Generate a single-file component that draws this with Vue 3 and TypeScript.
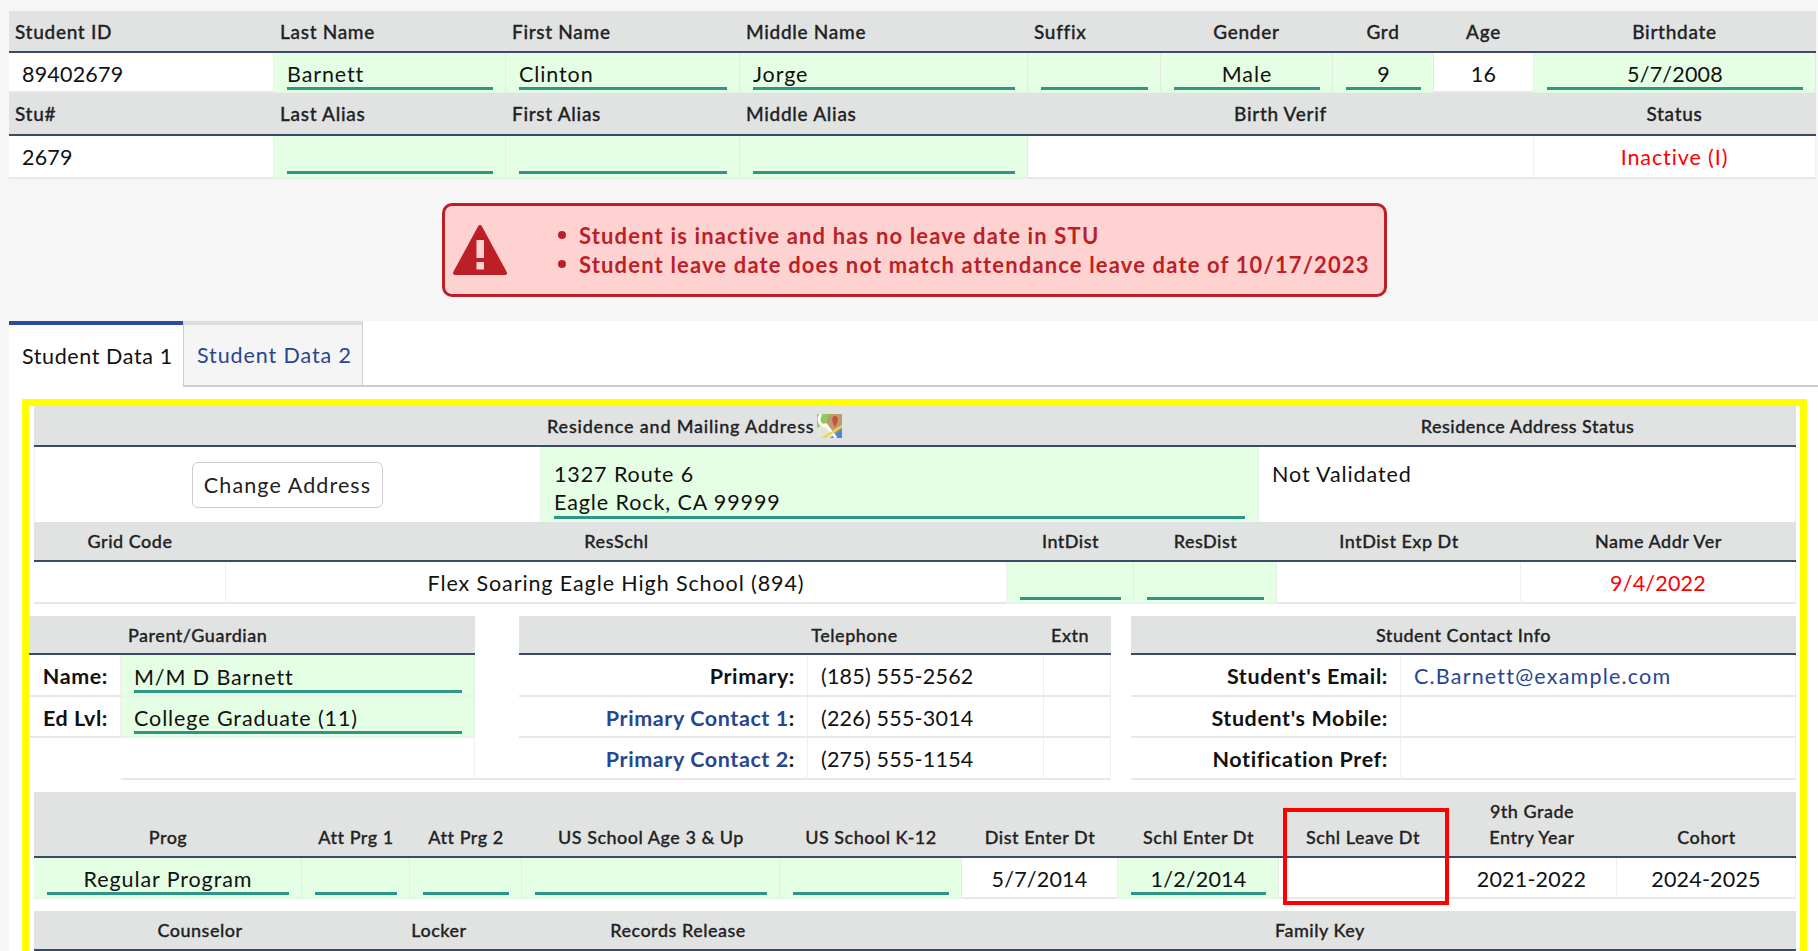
<script setup lang="ts">
type Kind = 'h' | 'v' | 'i' | 'l' | 'sp' | 'spb'
interface Cell {
  t?: string
  k: Kind
  c?: boolean
  red?: boolean
  link?: boolean
  span?: number
  extra?: string
}
const h = (t: string, c = false, span?: number, extra?: string): Cell => ({ t, k: 'h', c, span, extra })
const v = (t = '', c = false, span?: number, red = false): Cell => ({ t, k: 'v', c, span, red })
const i = (t = '', c = false): Cell => ({ t, k: 'i', c })

const student: Cell[] = [
  h('Student ID'), h('Last Name'), h('First Name'), h('Middle Name'), h('Suffix'), h('Gender', true), h('Grd', true), h('Age', true), h('Birthdate', true),
  v('89402679'), i('Barnett'), i('Clinton'), i('Jorge'), i(), i('Male', true), i('9', true), v('16', true), i('5/7/2008', true),
  h('Stu#'), h('Last Alias'), h('First Alias'), h('Middle Alias'), h('Birth Verif', true, 4), h('Status', true),
  v('2679'), i(), i(), i(), v('', false, 4), v('Inactive (I)', true, undefined, true),
]

const gridRow: Cell[] = [
  h('Grid Code', true), h('ResSchl', true), h('IntDist', true), h('ResDist', true), h('IntDist Exp Dt', true), h('Name Addr Ver', true),
  v(), v('Flex Soaring Eagle High School (894)', true), i(), i(), v(), v('9/4/2022', true, undefined, true),
]
const contact: Cell[] = [
  h('Parent/Guardian', false, 2, 'pg'), { k: 'sp' }, h('Telephone', true, 2, 'tel'), h('Extn'), { k: 'sp' }, h('Student Contact Info', true, 2),
  { t: 'Name:', k: 'l' }, i('M/M D Barnett'), { k: 'sp' }, { t: 'Primary:', k: 'l' }, v('(185) 555-2562'), v(), { k: 'sp' }, { t: "Student's Email:", k: 'l' }, { t: 'C.Barnett@example.com', k: 'v', link: true },
  { t: 'Ed Lvl:', k: 'l' }, i('College Graduate (11)'), { k: 'sp' }, { t: 'Primary Contact 1', k: 'l', link: true }, v('(226) 555-3014'), v(), { k: 'sp' }, { t: "Student's Mobile:", k: 'l' }, v(),
  { k: 'sp' }, v(), { k: 'spb' }, { t: 'Primary Contact 2', k: 'l', link: true }, v('(275) 555-1154'), v(), { k: 'sp' }, { t: 'Notification Pref:', k: 'l' }, v(),
]
const program: Cell[] = [
  h('Prog', true), h('Att Prg 1', true), h('Att Prg 2', true), h('US School Age 3 & Up', true), h('US School K-12', true), h('Dist Enter Dt', true), h('Schl Enter Dt', true), h('Schl Leave Dt', true), h('9th Grade\nEntry Year', true), h('Cohort', true),
  i('Regular Program', true), i(), i(), i(), i(), v('5/7/2014', true), i('1/2/2014', true), v(), v('2021-2022', true), v('2024-2025', true),
]
const family: Cell[] = [h('Counselor', true), h('Locker', true), h('Records Release', true), h('Family Key', true)]

const isNum = (t?: string) => !!t && /^[\d()\-/ ]+$/.test(t)
const classes = (c: Cell) => [
  'cell', c.k, c.extra ?? '',
  { center: c.c, red: c.red, link: c.link && c.k === 'v', num: isNum(c.t) },
]
const spanOf = (c: Cell) => (c.span ? { gridColumn: `span ${c.span}` } : undefined)
</script>

<template>
  <div class="page">
    <div class="top">
      <div class="grid g-student">
        <div v-for="(c, n) in student" :key="n" :class="classes(c)" :style="spanOf(c)">
          <span v-if="c.k === 'i'" class="input">{{ c.t }}</span>
          <template v-else>{{ c.t }}</template>
        </div>
      </div>

      <div class="alert-wrap">
        <div class="alert">
          <svg class="warn" viewBox="0 0 54 50" width="54" height="50" aria-hidden="true">
            <path fill="#bd1f27" stroke="#bd1f27" stroke-width="4" stroke-linejoin="round" d="M27 2 L52 48 L2 48 Z" />
            <rect x="23.5" y="15" width="7.5" height="18" fill="#ffd2d2" />
            <rect x="23.5" y="37" width="7.5" height="7.5" fill="#ffd2d2" />
          </svg>
          <ul class="msgs">
            <li>Student is inactive and has no leave date in STU</li>
            <li>Student leave date does not match attendance leave date of 10/17/2023</li>
          </ul>
        </div>
      </div>
    </div>

    <div class="main">
      <div class="tabs">
        <div class="tab active">Student Data 1</div>
        <div class="tab other">Student Data 2</div>
      </div>

      <div class="yellow">
        <div class="grid g-address">
          <div class="cell h addr-h">
            Residence and Mailing Address
            <svg class="map" viewBox="0 0 25 24" width="25" height="24" aria-hidden="true">
              <rect width="25" height="24" fill="#b89d70" />
              <path d="M0 0H12L9 9L0 14Z" fill="#8fca5c" />
              <path d="M0 14L9 9L17 24H0Z" fill="#dfe8d8" />
              <path d="M13 24L25 14V24Z" fill="#4a88d8" />
              <path d="M4 0C0 6 3 13 9 11L19 24" fill="none" stroke="#fff" stroke-width="3" />
              <path d="M6 24L25 12" fill="none" stroke="#f3d24c" stroke-width="2.5" />
              <path d="M18 2C15 2 13.500 6 18 13C22.500 6 21 2 18 2Z" fill="#d4493a" />
            </svg>
          </div>
          <div class="cell h center">Residence Address Status</div>
          <div class="cell v addr-btn"><button class="btn" type="button">Change Address</button></div>
          <div class="cell i addr-i">
            <span class="input textarea">1327 Route 6<br />Eagle Rock, CA 99999</span>
          </div>
          <div class="cell v addr-st">Not Validated</div>
        </div>

        <div class="grid g-grid">
          <div v-for="(c, n) in gridRow" :key="n" :class="classes(c)">
            <span v-if="c.k === 'i'" class="input">{{ c.t }}</span>
            <template v-else>{{ c.t }}</template>
          </div>
        </div>

        <div class="grid g-contact">
          <div v-for="(c, n) in contact" :key="n" :class="classes(c)" :style="spanOf(c)">
            <span v-if="c.k === 'i'" class="input">{{ c.t }}</span>
            <template v-else-if="c.k === 'l' && c.link"><span class="link-b">{{ c.t }}</span>:</template>
            <template v-else>{{ c.t }}</template>
          </div>
        </div>

        <div class="grid g-program">
          <div v-for="(c, n) in program" :key="n" :class="classes(c)">
            <span v-if="c.k === 'i'" class="input">{{ c.t }}</span>
            <template v-else>{{ c.t }}</template>
          </div>
          <div class="redbox"></div>
        </div>

        <div class="grid g-family">
          <div v-for="(c, n) in family" :key="n" :class="classes(c)">{{ c.t }}</div>
        </div>
      </div>
    </div>
  </div>
</template>

<style>
html, body { margin: 0; background: #f6f6f6; overflow: hidden; }
</style>

<style scoped>
.page {
  width: 1818px;
  height: 951px;
  overflow: hidden;
  font-family: "Lato", "Noto Sans", sans-serif;
  font-size: 21.5px;
  color: #111;
  box-sizing: border-box;
  letter-spacing: 0.9px;
}
.top { padding: 11px 2px 0 9px; }
.grid { display: grid; background: #fff; }
.g-student {
  grid-template-columns: 265px 232px 234px 288px 133px 172px 101px 100px 282px;
  grid-template-rows: 42px 40px 43px 43px;
}
.cell {
  display: flex;
  align-items: center;
  box-sizing: border-box;
  min-width: 0;
  white-space: pre-line;
}
.h {
  background: #e1e3e3;
  border-bottom: 2px solid #3c4a66;
  font-weight: 500;
  font-size: 18px;
  color: #222;
  padding: 0 7px;
  letter-spacing: 0.5px;
  -webkit-text-stroke: 0.3px currentColor;
}
.g-student .h { font-size: 19px; padding-left: 6px; letter-spacing: 0.7px; }
.v {
  padding: 2px 13px 0;
  border-right: 1px solid #eef0ee;
  border-bottom: 2px solid #e8e8e8;
}
.g-student .v:nth-child(-n+18) { padding-top: 3px; }
.g-student .v:nth-child(n+19) { padding-top: 0; }
.num { letter-spacing: 0.2px; }
.i {
  background: #e4ffe3;
  border-right: 1px solid #e4ece4;
  border-bottom: 2px solid #e4f6e4;
  padding: 0 12px 2px 13px;
  align-items: flex-end;
}
.g-student .i:nth-child(-n+18) { padding-bottom: 1px; }
.g-student .i:nth-child(n+19) { padding-bottom: 3px; }
.input {
  display: block;
  width: 100%;
  height: 29px;
  line-height: 26px;
  border-bottom: 3px solid #2e9688;
  box-sizing: border-box;
  white-space: nowrap;
  overflow: visible;
}
.center { justify-content: center; text-align: center; }
.center .input { text-align: center; }
.red { color: #fb0000; }
.link, .link-b { color: #27468f; }
.link { letter-spacing: 1.2px; }
.l {
  justify-content: flex-end;
  font-weight: 700;
  padding: 2px 12px 0;
  border-bottom: 2px solid #e8e8e8;
  border-right: 1px solid #eef0ee;
  letter-spacing: 0.6px;
}
.sp { background: #fff; }
.spb { background: #fff; border-bottom: 2px solid #e8e8e8; }

.alert-wrap { display: flex; justify-content: center; padding: 24px 0 24px 4px; }
.alert {
  width: 945px;
  height: 94px;
  box-sizing: border-box;
  background: #ffd2d2;
  border: 3px solid #bd1f27;
  border-radius: 10px;
  display: flex;
  align-items: center;
  color: #bd1f27;
  padding-left: 8px;
}
.warn { flex: none; }
.msgs {
  margin: 0;
  padding: 0 0 0 72px;
  list-style: none;
  font-size: 22px;
  font-weight: 700;
  line-height: 29px;
  letter-spacing: 1.15px;
}
.msgs li { position: relative; }
.msgs li::before {
  content: "";
  position: absolute;
  left: -21px;
  top: 10px;
  width: 8px;
  height: 8px;
  border-radius: 50%;
  background: currentColor;
}

.main { background: #fff; margin-left: 9px; height: 630px; }
.tabs { display: flex; height: 66px; border-bottom: 2px solid #ccc; box-sizing: border-box; }
.tab {
  box-sizing: border-box;
  height: 66px;
  display: flex;
  align-items: center;
  padding: 0 12px 0 13px;
  border-top: 4px solid;
  white-space: nowrap;
  letter-spacing: 0.6px;
}
.active { width: 174px; background: #fff; border-top-color: #2a4a9a; }
.other {
  width: 180px;
  background: #f5f5f5;
  color: #27468f;
  border-top-color: #ddd;
  border-right: 1px solid #ccc;
  border-left: 1px solid #ccc;
  border-bottom: 2px solid #ccc;
  letter-spacing: 0.9px;
}
.yellow {
  margin: 12px 11px 0 13px;
  width: 1785px;
  box-sizing: border-box;
  border: solid #ffff00;
  border-width: 7px 7px 0;
}
.g-address {
  margin: 0 4px 0 5px;
  grid-template-columns: 507px 718px 537px;
  grid-template-rows: 41px 75px;
}
.addr-h { grid-column: span 2; padding-left: 513px; letter-spacing: 0.8px; }
.map { margin-left: 3px; flex: none; }
.addr-btn { justify-content: center; padding: 0; border-left: 1px solid #eef0ee; border-bottom: 0; }
.btn {
  width: 191px;
  height: 46px;
  background: #fff;
  border: 1px solid #ccc;
  border-radius: 6px;
  padding: 0;
  font: inherit;
  letter-spacing: 1.1px;
  color: #222;
}
.addr-i { padding: 0 13px 3px 13px; border-bottom: 0; }
.textarea { height: auto; line-height: 28px; }
.addr-st { align-items: flex-start; padding: 14px 13px 0; border-bottom: 0; }
.g-grid {
  margin: 0 4px 12px 5px;
  grid-template-columns: 192px 781px 127px 143px 244px 275px;
  grid-template-rows: 40px 42px;
}
.g-contact {
  margin: 0 4px 12px 0;
  grid-template-columns: 92px 354px 44px 289px 236px 67px 20px 270px 395px;
  grid-template-rows: 39px 42px 41px 42px;
}
.pg { padding-left: 99px; }
.tel { padding-left: 153px; }
.g-program {
  position: relative;
  margin: 0 4px 12px 5px;
  grid-template-columns: 268px 108px 112px 258px 182px 156px 161px 168px 170px 179px;
  grid-template-rows: 66px 41px;
}
.g-program .h { align-items: flex-end; padding-bottom: 6px; line-height: 26px; }
.redbox {
  position: absolute;
  left: 1249px;
  top: 16px;
  width: 166px;
  height: 97px;
  box-sizing: border-box;
  border: 4px solid #ff0000;
  pointer-events: none;
}
.g-family {
  margin: 0 4px 0 5px;
  grid-template-columns: 332px 146px 332px 952px;
  grid-template-rows: 40px;
}
</style>
